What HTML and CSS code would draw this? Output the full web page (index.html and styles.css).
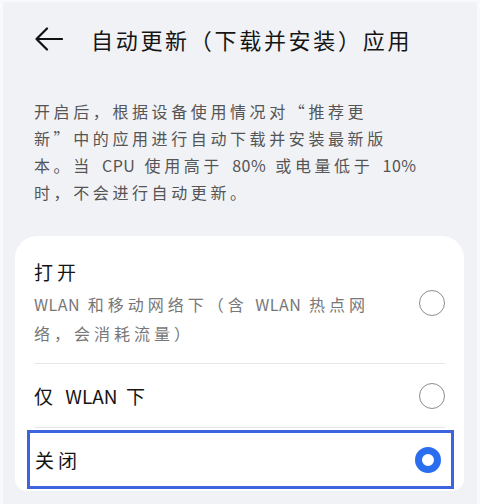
FILE: index.html
```html
<!DOCTYPE html>
<html lang="zh-CN">
<head>
<meta charset="UTF-8">
<meta name="viewport" content="width=device-width, initial-scale=1.0">
<title>自动更新（下载并安装）应用</title>
<link rel="stylesheet" href="styles.css">
</head>
<body>
<div class="screen">
  <div class="header">
    <svg class="back" width="28" height="24" viewBox="0 0 28 24">
      <path d="M1.5 12 H27 M12 1.5 L1.5 12 L12 22.5" fill="none" stroke="#111" stroke-width="2.2" stroke-linecap="round" stroke-linejoin="round"/>
    </svg>
    <h1 class="title">自动更新（下载并安装）应用</h1>
  </div>

  <p class="desc">开启后，根据设备使用情况对“推荐更<br>新”中的应用进行自动下载并安装最新版<br>本。当 <span class="latin">CPU</span> 使用高于 <span class="latin">80%</span> 或电量低于 <span class="latin">10%</span><br>时，不会进行自动更新。</p>

  <div class="card">
    <div class="option option-tall">
      <div class="option-text">
        <div class="option-title">打开</div>
        <div class="option-sub"><span class="latin">WLAN</span> 和移动网络下（含 <span class="latin">WLAN</span> 热点网<br>络，会消耗流量）</div>
      </div>
      <span class="radio"></span>
    </div>
    <div class="option">
      <div class="option-text">
        <div class="option-title">仅 <span class="latin">WLAN</span> 下</div>
      </div>
      <span class="radio"></span>
    </div>
    <div class="option option-focus">
      <div class="option-text">
        <div class="option-title">关闭</div>
      </div>
      <span class="radio checked"></span>
    </div>
  </div>
</div>
</body>
</html>
```

FILE: styles.css
```css
html, body {
  margin: 0;
  padding: 0;
  height: 100%;
}
body {
  background-color: #f8f9fb;
  font-family: "Noto Sans CJK SC", "Noto Sans", sans-serif;
  color: #111;
}
.screen {
  margin: 2px 3px 0 3px;
  height: calc(100% - 2px);
  background-color: #f1f2f6;
  overflow: hidden;
}
.header {
  height: 74px;
  display: flex;
  align-items: center;
  padding-left: 32px;
}
.back {
  display: block;
}
.title {
  margin: 0 0 0 28px;
  font-size: 22px;
  font-weight: normal;
  letter-spacing: 2.7px;
  line-height: 30px;
  color: #151515;
}
.desc {
  margin: 0;
  padding: 22px 0 0 31px;
  font-size: 16px;
  line-height: 27px;
  letter-spacing: 3.6px;
  word-spacing: 2px;
  color: #555;
}
/* latin words keep their own narrow spacing */
.latin {
  letter-spacing: 0.5px;
}
.card {
  margin: 30px 13px 0 12px;
  padding: 0 19px 2px 19px;
  background-color: #fff;
  border-radius: 22px 22px 12px 12px;
}
.option {
  display: flex;
  align-items: center;
  justify-content: space-between;
  height: 63px;
  border-bottom: 1px solid #e6e6e6;
}
.option-tall {
  height: auto;
  padding: 22px 0 15px 0;
}
.option-title {
  font-size: 19px;
  line-height: 28px;
  letter-spacing: 4px;
  color: #151515;
}
.option-title .latin {
  letter-spacing: 0;
}
.option-sub {
  margin-top: 4px;
  font-size: 16px;
  line-height: 29px;
  letter-spacing: 4px;
  color: #777;
}
.option-focus {
  height: 53px;
  margin: 2px -9px 0 -7px;
  padding: 0 10px 0 5px;
  border: 3px solid #3d64de;
}
.radio {
  flex: none;
  box-sizing: border-box;
  width: 26px;
  height: 26px;
  border: 1.5px solid #8c8c8c;
  border-radius: 50%;
}
.radio.checked {
  border: 7px solid #2a6def;
}
```
